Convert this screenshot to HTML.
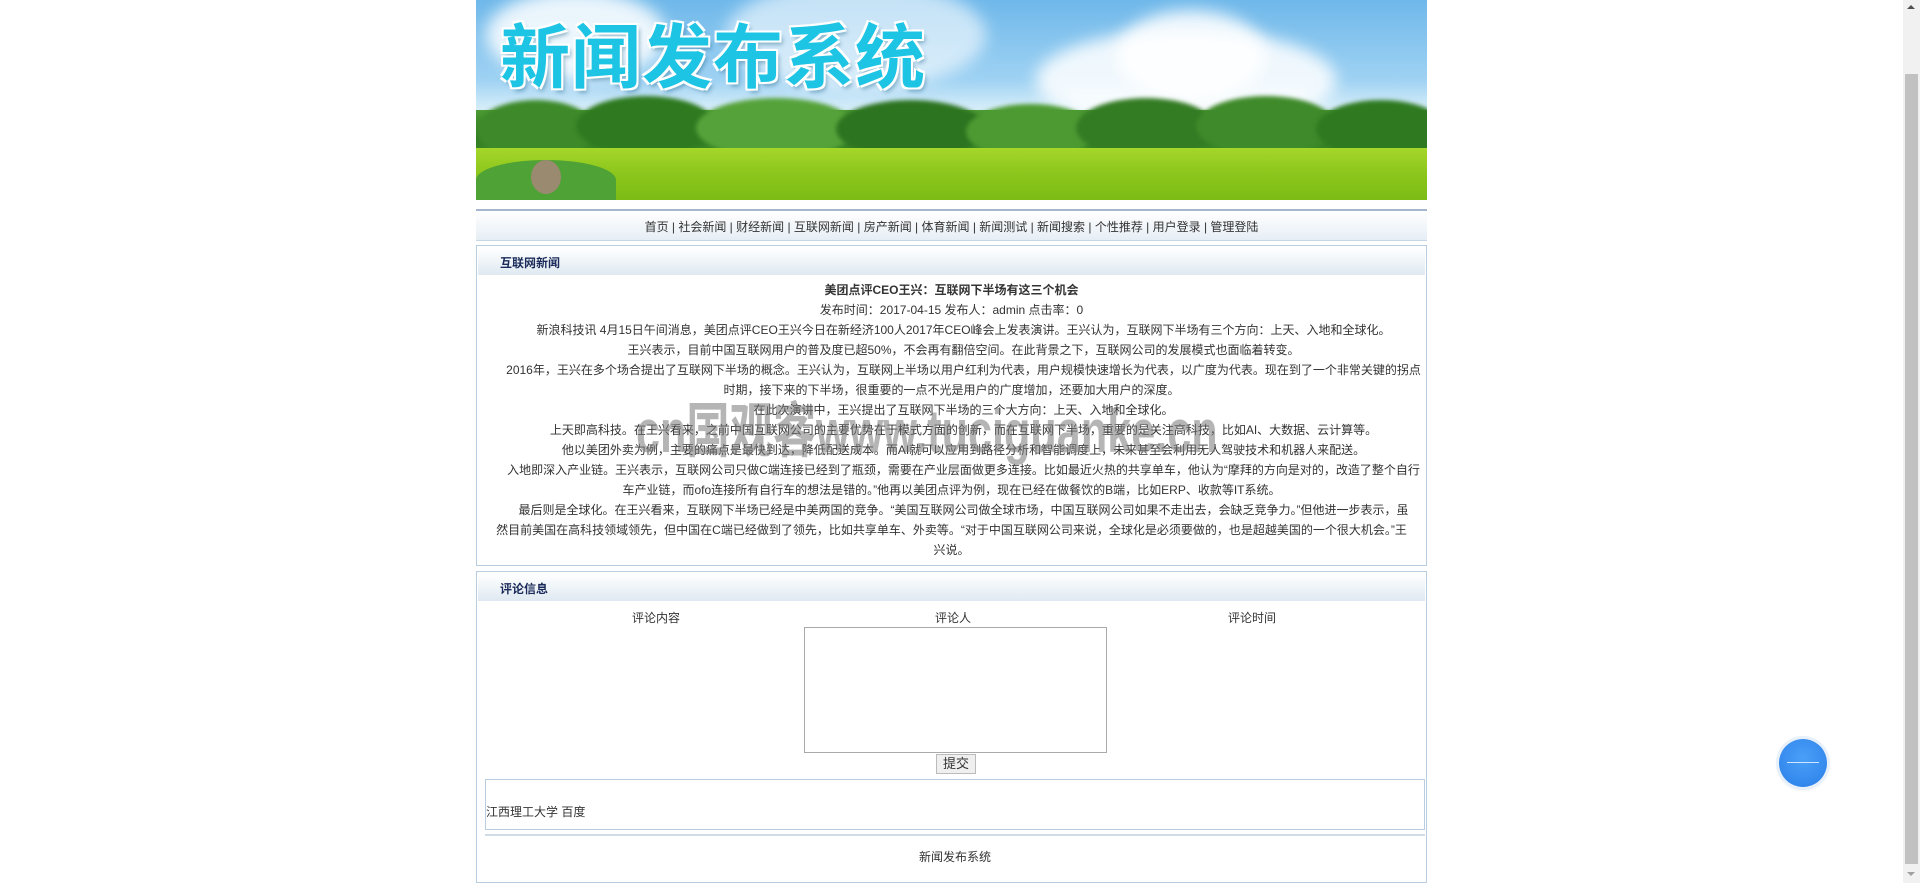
<!DOCTYPE html>
<html><head><meta charset="utf-8">
<style>
*{margin:0;padding:0;box-sizing:border-box}
body{width:1920px;height:883px;overflow:hidden;background:#fff;font-family:"Liberation Sans","Microsoft YaHei","Noto Sans CJK SC",sans-serif;font-size:12px;color:#333;position:relative}
#wrap{position:absolute;left:476px;top:0;width:951px}
.banner{height:200px;position:relative;overflow:hidden;background:linear-gradient(#6fb8ea 0%,#9fd2f3 40%,#cde9f8 52%,#d9eef8 56%)}
.cloud{position:absolute;border-radius:50%;background:rgba(255,255,255,.85);filter:blur(8px)}
.trees{position:absolute;left:0;top:110px;width:100%;height:45px;background:linear-gradient(#4d9b34,#2f7a22 60%,#3d8a2a)}
.tb{position:absolute;border-radius:50%;background:#4a9a30;filter:blur(2px)}
.grass{position:absolute;left:0;top:148px;width:100%;height:52px;background:linear-gradient(#a6d62a,#8cc61c 50%,#7cbc14)}
.title{position:absolute;left:24px;top:2px;font-size:70px;font-weight:bold;color:#1ec4e4;letter-spacing:1px;text-shadow:0 0 3px #fff,2px 2px 0 #fff,-2px -2px 0 #fff,2px -2px 0 #fff,-2px 2px 0 #fff,3px 4px 4px rgba(0,80,120,.4);font-family:"WenQuanYi Zen Hei","Noto Sans CJK SC",sans-serif}
.nav{position:absolute;top:209px;left:0;width:951px;height:32px;border-top:2px solid #a5b6cf;background:linear-gradient(#fff,#e6eef5);border-bottom:1px solid #c8d5e3;text-align:center;line-height:32px;color:#333;font-size:12px}
.box{position:absolute;left:0;width:951px;border:1px solid #b8cde0}
.hd{height:27px;background:linear-gradient(#fff,#dfe9f1);line-height:30px;padding-left:22px;font-weight:bold;color:#1a2a5a;font-size:12px;margin:2px 1px 0}
.ct{text-align:center;line-height:20px;padding:4px 2px 0}
.ct p{text-indent:2em}
.wm{position:absolute;left:160px;top:383px;font-size:60px;font-weight:bold;color:rgba(120,120,120,.55);white-space:nowrap;transform:scaleX(.72);transform-origin:left top}
</style></head><body>
<div id="wrap">
 <div class="banner">
  <div class="cloud" style="left:10px;top:-10px;width:180px;height:90px"></div>
  <div class="cloud" style="left:250px;top:-20px;width:260px;height:110px;opacity:.7"></div>
  <div class="cloud" style="left:560px;top:30px;width:300px;height:100px"></div>
  <div class="cloud" style="left:640px;top:10px;width:150px;height:90px"></div>
  <div class="trees"></div>
  <div class="tb" style="left:0px;top:100px;width:120px;height:60px;background:#3e8a2a"></div>
  <div class="tb" style="left:100px;top:96px;width:140px;height:60px;background:#2f7a20"></div>
  <div class="tb" style="left:220px;top:98px;width:160px;height:60px;background:#56a23a"></div>
  <div class="tb" style="left:360px;top:100px;width:150px;height:58px;background:#2d7420"></div>
  <div class="tb" style="left:490px;top:104px;width:130px;height:55px;background:#4d9a32"></div>
  <div class="tb" style="left:600px;top:98px;width:140px;height:60px;background:#347c24"></div>
  <div class="tb" style="left:720px;top:96px;width:140px;height:60px;background:#3f8a2a"></div>
  <div class="tb" style="left:840px;top:100px;width:130px;height:58px;background:#2f7a20"></div>
  <div class="grass"></div>
  <div style="position:absolute;left:0;top:160px;width:140px;height:40px;border-radius:50% 50% 0 0;background:#4fa236"></div>
  <div style="position:absolute;left:55px;top:160px;width:30px;height:34px;border-radius:50%;background:#9a8a70"></div>
  <div class="title">新闻发布系统</div>
 </div>
 <div class="nav">首页 | 社会新闻 | 财经新闻 | 互联网新闻 | 房产新闻 | 体育新闻 | 新闻测试 | 新闻搜索 | 个性推荐 | 用户登录 | 管理登陆</div>

 <div class="box" style="top:245px;height:321px">
  <div class="hd">互联网新闻</div>
  <div class="ct">
   <div style="font-weight:bold;margin-top:1px">美团点评CEO王兴：互联网下半场有这三个机会</div>
   <div>发布时间：2017-04-15 发布人：admin 点击率：0</div>
   <p>新浪科技讯 4月15日午间消息，美团点评CEO王兴今日在新经济100人2017年CEO峰会上发表演讲。王兴认为，互联网下半场有三个方向：上天、入地和全球化。</p>
   <p>王兴表示，目前中国互联网用户的普及度已超50%，不会再有翻倍空间。在此背景之下，互联网公司的发展模式也面临着转变。</p>
   <p>2016年，王兴在多个场合提出了互联网下半场的概念。王兴认为，互联网上半场以用户红利为代表，用户规模快速增长为代表，以广度为代表。现在到了一个非常关键的拐点时期，接下来的下半场，很重要的一点不光是用户的广度增加，还要加大用户的深度。</p>
   <p>在此次演讲中，王兴提出了互联网下半场的三个大方向：上天、入地和全球化。</p>
   <p>上天即高科技。在王兴看来，之前中国互联网公司的主要优势在于模式方面的创新，而在互联网下半场，重要的是关注高科技，比如AI、大数据、云计算等。</p>
   <p>他以美团外卖为例，主要的痛点是最快到达，降低配送成本。而AI就可以应用到路径分析和智能调度上，未来甚至会利用无人驾驶技术和机器人来配送。</p>
   <p>入地即深入产业链。王兴表示，互联网公司只做C端连接已经到了瓶颈，需要在产业层面做更多连接。比如最近火热的共享单车，他认为“摩拜的方向是对的，改造了整个自行车产业链，而ofo连接所有自行车的想法是错的。”他再以美团点评为例，现在已经在做餐饮的B端，比如ERP、收款等IT系统。</p>
   <p>最后则是全球化。在王兴看来，互联网下半场已经是中美两国的竞争。“美国互联网公司做全球市场，中国互联网公司如果不走出去，会缺乏竞争力。”但他进一步表示，虽<br>然目前美国在高科技领域领先，但中国在C端已经做到了领先，比如共享单车、外卖等。“对于中国互联网公司来说，全球化是必须要做的，也是超越美国的一个很大机会。”王<br>兴说。</p>
  </div>
 </div>

 <div class="box" style="top:571px;height:312px">
  <div class="hd">评论信息</div>
  <div style="position:absolute;top:37px;left:0;width:951px;height:16px">
   <span style="position:absolute;left:155px">评论内容</span>
   <span style="position:absolute;left:458px">评论人</span>
   <span style="position:absolute;left:751px">评论时间</span>
  </div>
  <div style="position:absolute;left:327px;top:55px;width:303px;height:126px;border:1px solid #aaa;background:#fff"></div>
  <div style="position:absolute;left:459px;top:182px;width:40px;height:20px;border:1px solid #bbb;background:#efefef;text-align:center;line-height:18px;font-size:13px">提交</div>
  <div style="position:absolute;left:8px;top:207px;width:940px;height:51px;border:1px solid #b8cde0;line-height:14px;padding-top:25px">江西理工大学 百度</div>
  <div style="position:absolute;left:8px;top:262px;width:940px;border-top:2px solid #d0dce8;text-align:center;padding-top:12px">新闻发布系统</div>
 </div>
 <div class="wm">cn国观客www.tuciguanke.cn</div>
</div>
<div style="position:absolute;left:1779px;top:739px;width:48px;height:48px;border-radius:50%;background:radial-gradient(circle at 50% 40%,#4aa0f8,#2a7ee8);box-shadow:0 0 0 3px #e8f0fa,0 2px 4px rgba(0,0,0,.15)">
 <div style="position:absolute;left:8px;top:23px;width:32px;height:1px;background:#cfe6ff"></div>
</div>
<div style="position:absolute;left:1903px;top:0;width:17px;height:883px;background:#f1f1f1">
 <div style="position:absolute;left:2px;top:74px;width:13px;height:790px;background:#c1c1c1"></div>
 <div style="position:absolute;left:4px;top:5px;width:0;height:0;border-left:4px solid transparent;border-right:4px solid transparent;border-bottom:4px solid #505050"></div>
 <div style="position:absolute;left:4px;top:872px;width:0;height:0;border-left:4px solid transparent;border-right:4px solid transparent;border-top:4px solid #a0a0a0"></div>
</div>
</body></html>
